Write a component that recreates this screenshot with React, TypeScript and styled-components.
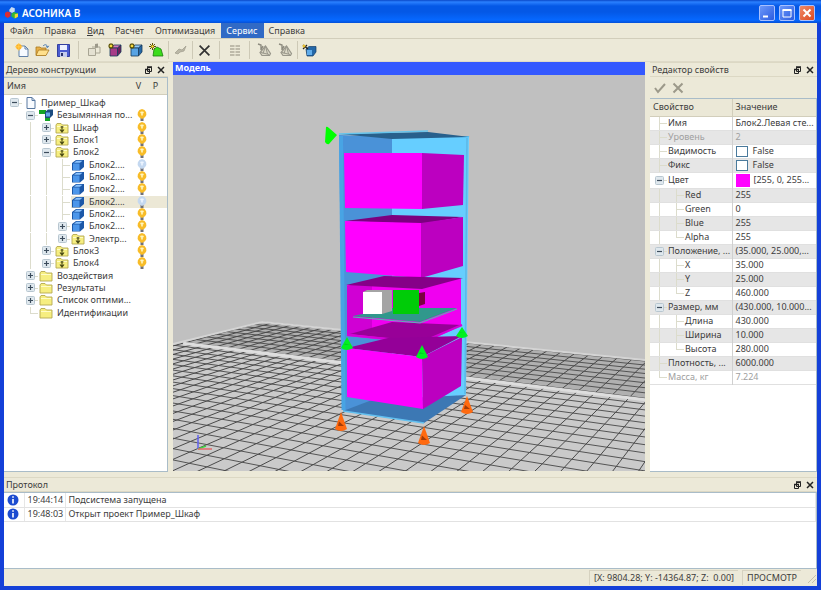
import React from "react";
import styled, { createGlobalStyle, css } from "styled-components";

const Global = createGlobalStyle`
  * { box-sizing: border-box; }
  body { margin: 0; background: #0f3fd8; }
  button { font: inherit; color: inherit; border: 0; padding: 0; background: none; }
  body, table { font-family: "Noto Sans", "Open Sans", sans-serif; font-size: 9px; line-height: 12px; color: #3c3c3c; }
`;

const Window = styled.div`
  min-height: 100vh;
  display: flex;
  flex-direction: column;
  background: #ece9d8;
  border: solid #1440d8;
  border-width: 0 4px 4px;
`;

const TitleBar = styled.header`
  display: flex;
  align-items: center;
  gap: 4px;
  height: 23px;
  margin: 0 -4px;
  padding: 2px 6px 0 5px;
  color: #fff;
  background: linear-gradient(#0a48c8 0, #2a80ff 2px, #0458e6 6px, #0458e6 12px, #0668ff 20px, #0450d8 23px);
`;
const AppName = styled.h1`
  flex: 1;
  margin: 0;
  font-size: 10px;
  font-weight: 600;
  line-height: 14px;
`;
const Caption = styled.button<{ $danger?: boolean }>`
  width: 16px;
  height: 16px;
  border: 1px solid #a8c0ff;
  border-radius: 2px;
  background: ${(p) => (p.$danger ? "linear-gradient(135deg,#f08a68,#dc4a20)" : "linear-gradient(135deg,#6c98fa,#2c5ce0)")};
  svg { display: block; }
`;

const MenuBar = styled.nav`
  display: flex;
  height: 16px;
  padding-left: 1px;
  border-bottom: 1px solid #d2cebb;
`;
const MenuItem = styled.button<{ $active?: boolean }>`
  padding: 0 6px 0 5px;
  line-height: 15px;
  ${(p) => p.$active && css`background: #316ac5; color: #fff;`}
`;

const ToolBar = styled.div`
  display: flex;
  align-items: center;
  height: 23px;
  padding: 0 7px;
  border-bottom: 1px solid #dedac8;
`;
const Tool = styled.button`
  width: 21px;
  height: 18px;
  display: grid;
  place-items: center;
  svg { display: block; }
`;
const Separator = styled.span<{ $wide?: boolean }>`
  width: 1px;
  height: 18px;
  margin: 0 ${(p) => (p.$wide ? 4 : 1)}px;
  background: #cdc9b6;
`;

const Workspace = styled.main`
  flex: 1;
  display: flex;
  gap: 5px;
`;
const Dock = styled.section<{ $width?: number }>`
  display: flex;
  flex-direction: column;
  flex: ${(p) => (p.$width ? `0 0 ${p.$width}px` : "none")};
  min-width: 0;
`;
const BottomDock = styled(Dock)`
  padding-top: 5px;
`;
const DockTitle = styled.div`
  display: flex;
  align-items: center;
  height: 15px;
  padding: 0 1px 0 2px;
  border-top: 1px solid #dcd8c4;
  border-bottom: 1px solid #dcd8c4;
  h2 { flex: 1; margin: 0; font-size: 9px; font-weight: 400; line-height: 13px; }
`;
const DockButton = styled.button`
  width: 12px;
  height: 12px;
  svg { display: block; }
`;
const Sheet = styled.div`
  flex: 1;
  background: #fff;
  border: 1px solid #a9bcc8;
  border-width: 1px 1px 1px 0;
  overflow: hidden;
`;

const Tree = styled.table`
  width: 100%;
  border-collapse: collapse;
  table-layout: fixed;
  td, th { padding: 0; }
  thead tr { height: 16px; background: #ebe8d7; }
  th { font-weight: 400; text-align: center; border-bottom: 1px solid #d2cebb; }
  th:first-child { text-align: left; padding-left: 3px; }
  tbody::before { content: ""; display: block; height: 2px; }
`;
const TreeRow = styled.tr<{ $selected?: boolean }>`
  height: 12px;
  &:nth-child(3n + 2) { height: 13px; }
  td { height: inherit; }
  ${(p) => p.$selected && css`background: linear-gradient(90deg, transparent 67px, #ece8d6 67px);`}
`;
const NodeCell = styled.div`
  display: flex;
  align-items: center;
  height: 12px;
  padding-left: 2px;
  white-space: nowrap;
  > * { flex-shrink: 0; }
`;
const Guide = styled.span<{ $line?: boolean }>`
  align-self: stretch;
  width: 16px;
  background: ${(p) => (p.$line ? "linear-gradient(#dcdccc,#dcdccc) 8px 0 / 1px 100% no-repeat" : "none")};
`;
const Expander = styled.button`
  width: 16px;
  height: 12px;
  display: grid;
  place-items: center;
  background: linear-gradient(#dcdccc, #dcdccc) 8px 6px / 8px 1px no-repeat;
  svg { display: block; }
`;
const Leaf = styled.span<{ $last?: boolean }>`
  align-self: stretch;
  width: 16px;
  background: linear-gradient(#dcdccc, #dcdccc) 8px 0 / 1px ${(p) => (p.$last ? "50%" : "100%")} no-repeat,
    linear-gradient(#dcdccc, #dcdccc) 8px 6px / 8px 1px no-repeat;
`;
const NodeIcon = styled.span`
  width: 19px;
  height: 12px;
  padding-left: 1px;
  svg { display: block; }
`;
const Bulb = styled.button`
  display: block;
  width: 20px;
  height: 12px;
  padding-left: 4px;
  svg { display: block; }
`;

const Scene = styled.section`
  flex: 1;
  min-width: 0;
  display: flex;
  flex-direction: column;
  margin-bottom: 1px;
`;
const SceneTitle = styled.h2`
  margin: 0;
  height: 13px;
  padding-left: 2px;
  background: #3358ff;
  color: #fff;
  font-size: 9px;
  line-height: 12px;
  font-weight: 700;
`;
const Canvas = styled.div`
  flex: 1;
  display: grid;
  min-height: 0;
  background: #c0c0c0;
  svg { display: block; width: 100%; height: 100%; min-height: 0; }
`;

const PropActions = styled.div`
  display: flex;
  gap: 5px;
  height: 21px;
  padding: 5px 3px 4px;
  svg { display: block; }
`;
const Props = styled.table`
  width: 100%;
  border-collapse: collapse;
  table-layout: fixed;
  th, td { padding: 0; text-align: left; font-weight: 400; white-space: nowrap; }
  thead tr { height: 17px; background: #ebe8d7; }
  thead th { padding-left: 3px; border-bottom: 1px solid #d2cebb; }
  thead th + th { border-left: 1px solid #d2cebb; }
  td { padding-left: 3px; border-left: 1px solid #d0d0d0; }
`;
const PropRow = styled.tr<{ $shade?: boolean; $muted?: boolean; $tall?: boolean }>`
  height: ${(p) => (p.$tall ? 16 : 14)}px;
  background: ${(p) => (p.$shade ? "#e6e6e6" : "#fff")};
  color: ${(p) => (p.$muted ? "#a0a0a0" : "#3c3c3c")};
  border-bottom: 1px solid #e0e0e0;
`;
const PropName = styled.div`
  display: flex;
  align-items: center;
  gap: 1px;
  height: 13px;
  padding-left: 1px;
`;
const PropValue = styled.div`
  display: flex;
  align-items: center;
  height: 12px;
`;
const Check = styled.input`
  appearance: none;
  width: 12px;
  height: 11px;
  margin: 0 5px 0 0;
  border: 1px solid #4a7a9c;
  background: #fff;
`;
const Swatch = styled.button`
  width: 14px;
  height: 13px;
  margin-right: 4px;
  background: #ff00ff;
`;

const LogSheet = styled(Sheet)`
  flex: none;
  min-height: 77px;
`;
const Log = styled.table`
  width: 100%;
  border-collapse: collapse;
  table-layout: fixed;
  td { height: 14px; padding: 0 0 0 3px; border-bottom: 1px solid #e2e2e2; border-right: 1px solid #e6e6e6; }
  svg { display: block; }
`;
const StatusBar = styled.footer`
  display: flex;
  justify-content: flex-end;
  align-items: center;
  gap: 4px;
  height: 17px;
`;
const StatusCell = styled.span`
  padding: 0 4px;
  line-height: 14px;
  border: solid #d6d2c0;
  border-width: 1px 0 0 1px;
  white-space: pre;
`;

/* ---------- icons ---------- */

const Cube = ({ front, top, side }: { front: string; top: string; side: string }) => (
  <svg width="14" height="14" viewBox="0 0 14 14" aria-hidden>
    <path d="M2 5 6 2h7L9.500 5z" fill={top} stroke="#173a5c" strokeWidth=".8" />
    <path d="M9.500 5 13 2v7l-3.500 4z" fill={side} stroke="#173a5c" strokeWidth=".8" />
    <path d="M2 5h7.500v8H2z" fill={front} stroke="#173a5c" strokeWidth=".8" />
    <path d="M3 0v6M0 3h6M1 1l4 4M5 1 1 5" stroke="#5c5200" strokeWidth="1.100" />
    <circle cx="3" cy="3" r="1.200" fill="#ffe040" />
  </svg>
);
const BlueCube = () => (
  <svg width="14" height="12" viewBox="0 0 14 12" aria-hidden>
    <path d="M1 4 5 1h8v7l-4 3.500H1z" fill="#1c58a8" />
    <path d="M2 4.500h6.500V11H2z" fill="#4c96ea" />
    <path d="M3 3.700 5.500 1.800h6L9 3.700z" fill="#8cc4ff" />
  </svg>
);
const Folder = ({ mark }: { mark?: boolean }) => (
  <svg width="14" height="12" viewBox="0 0 14 12" aria-hidden>
    <path d="M1 3 2 1.500h4L7.500 3H13v8H1z" fill="#f6ee80" stroke="#b4a850" strokeWidth=".9" />
    <path d="M2 4.500h10" stroke="#fffcc8" />
    {mark && <path d="M7 4v6M5 7.500 7 10l2-2.500M5.500 5h3" stroke="#4c4c14" strokeWidth="1.200" fill="none" />}
  </svg>
);
const Page = () => (
  <svg width="14" height="12" viewBox="0 0 14 12" aria-hidden>
    <path d="M4 .5h5L12 3.500v8H4z" fill="#f8fbff" stroke="#5878a0" />
    <path d="M9 .5v3h3" fill="none" stroke="#5878a0" />
  </svg>
);
const Assembly = () => (
  <svg width="16" height="12" viewBox="0 0 16 12" aria-hidden>
    <path d="M0 1h7v4H0zM6 7h5v5H6z" fill="#14a424" />
    <path d="M6 3 9 .5h5V6l-3 3H6z" fill="#1c4c80" />
    <path d="M7 3.500h4v4H7z" fill="#66a8e8" />
  </svg>
);
const PlusMinus = ({ open }: { open?: boolean }) => (
  <svg width="9" height="9" viewBox="0 0 9 9" aria-hidden>
    <rect x=".5" y=".5" width="8" height="8" rx="1" fill="#dfe8ee" stroke="#b8c6d0" />
    <path d={open ? "M2 4.500h5" : "M2 4.500h5M4.500 2v5"} stroke="#3c4c5c" strokeWidth="1.200" />
  </svg>
);
const BulbIcon = ({ off }: { off?: boolean }) => (
  <svg width="16" height="12" viewBox="0 0 16 12" aria-hidden>
    <path d="M6.500 8.500h3V12h-3z" fill="#707078" />
    <path d="M8 0a4.800 4.800 0 0 1 3 8.200L8 10 5 8.200A4.800 4.800 0 0 1 8 0z" fill={off ? "#c4d8f0" : "#f8bc28"} />
    <path d="M8 2.500v4M6.300 3.500h3.400" stroke={off ? "#eef5ff" : "#fff6c0"} strokeWidth="1.600" />
  </svg>
);
const Cross = ({ size = 12, color = "#333", w = 1.6 }: { size?: number; color?: string; w?: number }) => (
  <svg width={size} height={size} viewBox="0 0 12 12" aria-hidden>
    <path d="M1.500 1.500l9 9M10.500 1.500l-9 9" stroke={color} strokeWidth={w} />
  </svg>
);
const NewIcon = () => (
  <svg width="14" height="14" viewBox="0 0 14 14" aria-hidden>
    <path d="M4 3h6l3 3v7.500H4z" fill="#f6faff" stroke="#6080a8" />
    <path d="M10 3v3h3" fill="none" stroke="#6080a8" />
    <circle cx="3.800" cy="3.800" r="2.800" fill="#ffb020" />
    <path d="M3.800 0v7.600M0 3.800h7.600" stroke="#ffcc50" />
  </svg>
);
const OpenIcon = () => (
  <svg width="15" height="14" viewBox="0 0 15 14" aria-hidden>
    <path d="M1 4h4l1 1h5v7H1z" fill="#e8b048" stroke="#a87820" strokeWidth=".8" />
    <path d="M3.500 7H14l-3 5.500H1z" fill="#ffe08c" stroke="#a87820" strokeWidth=".8" />
    <path d="M8 3c2-2 4-1.500 4.500 1M11 3.500l1.700 1 1-1.700" fill="none" stroke="#4878b0" />
  </svg>
);
const SaveIcon = () => (
  <svg width="13" height="13" viewBox="0 0 13 13" aria-hidden>
    <path d="M.5.5h12v12H.5z" fill="#4a5cd0" stroke="#3440a0" />
    <path d="M3 1h7v5H3z" fill="#eef2ff" />
    <path d="M3 8h7v5H3z" fill="#c4ccec" />
    <path d="M4 9h2v3H4z" fill="#28306c" />
  </svg>
);
const GreyPackage = () => (
  <svg width="14" height="14" viewBox="0 0 14 14" aria-hidden>
    <path d="M1.500 5.500h7v7h-7z" fill="#e4e1d2" stroke="#a8a594" />
    <path d="M5 4h8v6H9" fill="none" stroke="#a8a594" />
    <path d="M8 1l3-.5v4L8 5z" fill="#9c998a" />
  </svg>
);
const GreenBlock = () => (
  <svg width="15" height="14" viewBox="0 0 15 14" aria-hidden>
    <path d="M4 13 5 6l3-2 4 2 2 7z" fill="#3cdc1c" stroke="#1c7c10" strokeWidth=".8" />
    <path d="M3.500 0v7M0 3.500h7M1 1l5 5M6 1 1 6" stroke="#5c5200" />
    <circle cx="3.500" cy="3.500" r="1.200" fill="#ffe040" />
  </svg>
);
const GreyPlane = () => (
  <svg width="14" height="10" viewBox="0 0 14 10" aria-hidden>
    <path d="M1 8 5 4l3 1 4-4-2 5-4 1-2 2z" fill="#bab7a6" stroke="#a4a192" strokeWidth=".8" />
  </svg>
);
const GreyList = () => (
  <svg width="12" height="13" viewBox="0 0 12 13" aria-hidden>
    <path d="M1 2h10M1 5h10M1 8h10M1 11h10" stroke="#aeab9b" strokeWidth="1.500" />
    <path d="M6 1v11" stroke="#ece9d8" />
  </svg>
);
const GreyCone = () => (
  <svg width="15" height="14" viewBox="0 0 15 14" aria-hidden>
    <path d="M1 1l3 1v5l2-4" fill="none" stroke="#8c8a7e" strokeWidth="1.400" />
    <path d="M8.500 3 3 9.500 5 12.500h7.500l1-2z" fill="#dcd9c8" stroke="#98968a" strokeWidth="1.200" />
    <path d="M8.500 3 6 10.500M8.500 3l2 8M4 9.500l8 2" fill="none" stroke="#98968a" />
  </svg>
);
const CubeGroup = () => (
  <svg width="15" height="14" viewBox="0 0 15 14" aria-hidden>
    <path d="M4 6 7 3.500h7V9l-3 4H5z" fill="#2468a8" stroke="#123c68" strokeWidth=".7" />
    <path d="M5 7h5v5H5z" fill="#60acea" />
    <path d="M1 2l5 4M1 6l4-4" stroke="#222" strokeWidth="1.200" />
    <circle cx="2" cy="3" r="1.500" fill="#e8c030" />
  </svg>
);
const LogoIcon = () => (
  <svg width="13" height="13" viewBox="0 0 12 12" aria-hidden>
    <path d="M4 3.500 6 1l3 1v3L6.500 6.500 4 5z" fill="#c8dcf4" />
    <path d="M0 6.500 2 5l3 1v3.500L2.500 11 0 9.500z" fill="#dc2c30" />
    <path d="M6 7l2.500-1.500L12 7v3l-3 1.500L6 10z" fill="#34b834" />
    <path d="M9 7.500l3-.5v3l-3 1.500z" fill="#f0d838" />
  </svg>
);
const FloatIcon = () => (
  <svg width="12" height="12" viewBox="0 0 12 12" aria-hidden>
    <path d="M4.500 3.500h4v4h-4zM2.500 5.500h4v4h-4z" fill="#ece9d8" stroke="#222" />
    <path d="M4 3h5M2 5.500h5" stroke="#222" strokeWidth="1.500" />
  </svg>
);
const InfoIcon = () => (
  <svg width="12" height="12" viewBox="0 0 12 12" aria-hidden>
    <circle cx="6" cy="6" r="5.500" fill="#1c4cd0" />
    <path d="M6 5v4.500M6 2.300v1.500" stroke="#fff" strokeWidth="1.600" />
  </svg>
);

const DockHead = ({ title }: { title: string }) => (
  <DockTitle>
    <h2>{title}</h2>
    <DockButton aria-label="Открепить"><FloatIcon /></DockButton>
    <DockButton aria-label="Закрыть">
      <svg width="12" height="12" viewBox="0 0 12 12"><path d="M3 3l6 6M9 3 3 9" stroke="#222" strokeWidth="1.500" /></svg>
    </DockButton>
  </DockTitle>
);

/* ---------- data ---------- */

type Kind = "page" | "assembly" | "marked" | "cube" | "folder";
type Node = { depth: number; kind: Kind; text: string; exp?: "+" | "-"; bulb?: "on" | "off"; sel?: boolean };
const nodes: Node[] = [
  { depth: 0, kind: "page", text: "Пример_Шкаф", exp: "-" },
  { depth: 1, kind: "assembly", text: "Безымянная по...", exp: "-", bulb: "on" },
  { depth: 2, kind: "marked", text: "Шкаф", exp: "+", bulb: "on" },
  { depth: 2, kind: "marked", text: "Блок1", exp: "+", bulb: "on" },
  { depth: 2, kind: "marked", text: "Блок2", exp: "-", bulb: "on" },
  { depth: 3, kind: "cube", text: "Блок2....", bulb: "off" },
  { depth: 3, kind: "cube", text: "Блок2....", bulb: "on" },
  { depth: 3, kind: "cube", text: "Блок2....", bulb: "on" },
  { depth: 3, kind: "cube", text: "Блок2....", bulb: "off", sel: true },
  { depth: 3, kind: "cube", text: "Блок2....", bulb: "on" },
  { depth: 3, kind: "cube", text: "Блок2....", exp: "+", bulb: "on" },
  { depth: 3, kind: "marked", text: "Электр...", exp: "+", bulb: "on" },
  { depth: 2, kind: "marked", text: "Блок3", exp: "+", bulb: "on" },
  { depth: 2, kind: "marked", text: "Блок4", exp: "+", bulb: "on" },
  { depth: 1, kind: "folder", text: "Воздействия", exp: "+" },
  { depth: 1, kind: "folder", text: "Результаты", exp: "+" },
  { depth: 1, kind: "folder", text: "Список оптими...", exp: "+" },
  { depth: 1, kind: "folder", text: "Идентификации" },
];
const kindIcon: Record<Kind, React.ReactNode> = {
  page: <Page />, assembly: <Assembly />, marked: <Folder mark />, cube: <BlueCube />, folder: <Folder />,
};

type Prop = { name: string; value: string; depth?: number; group?: boolean; muted?: boolean; check?: boolean; color?: boolean };
const props: Prop[] = [
  { name: "Имя", value: "Блок2.Левая сте..." },
  { name: "Уровень", value: "2", muted: true },
  { name: "Видимость", value: "False", check: true },
  { name: "Фикс", value: "False", check: true },
  { name: "Цвет", value: "[255, 0, 255...", group: true, color: true },
  { name: "Red", value: "255", depth: 1 },
  { name: "Green", value: "0", depth: 1 },
  { name: "Blue", value: "255", depth: 1 },
  { name: "Alpha", value: "255", depth: 1 },
  { name: "Положение, ...", value: "(35.000, 25.000,...", group: true },
  { name: "X", value: "35.000", depth: 1 },
  { name: "Y", value: "25.000", depth: 1 },
  { name: "Z", value: "460.000", depth: 1 },
  { name: "Размер, мм", value: "(430.000, 10.000...", group: true },
  { name: "Длина", value: "430.000", depth: 1 },
  { name: "Ширина", value: "10.000", depth: 1 },
  { name: "Высота", value: "280.000", depth: 1 },
  { name: "Плотность, ...", value: "6000.000" },
  { name: "Масса, кг", value: "7.224", muted: true },
];

const menus = ["Файл", "Правка", "Вид", "Расчет", "Оптимизация", "Сервис", "Справка"];
const log = [
  ["19:44:14", "Подсистема запущена"],
  ["19:48:03", "Открыт проект Пример_Шкаф"],
];

/* ---------- 3D scene ---------- */

const HORIZON = 166;
const BASE = 472;
const VA = -1267;
const VB = 845;
type Pt = [number, number];
const at = (v: number, x: number, y: number): Pt => [v + ((x - v) * (y - HORIZON)) / (BASE - HORIZON), y];
/* crossing of floor line a (through VA) and floor line b (through VB), both given at BASE */
const cross = (a: number, b: number): Pt => {
  const t = (VB - VA) / (a - VA - (b - VB));
  return [VA + (a - VA) * t, HORIZON + (BASE - HORIZON) * t];
};
const A0 = 1732;
const B0 = -298;
const seg = (p: Pt, q: Pt) => `M${p[0].toFixed(1)} ${p[1].toFixed(1)}L${q[0].toFixed(1)} ${q[1].toFixed(1)}`;
const alongA = (a: number) => seg(cross(a, B0), at(VA, a, 640));
const floorA = Array.from({ length: 31 }, (_, i) => alongA(A0 - 60 * i)).join("");
const floorB = Array.from({ length: 46 }, (_, j) => B0 + 26 * j).map((b) => seg(cross(A0, b), at(VB, b, 640))).join("");
const brightLine = alongA(1237);

const Cone = ({ x, y, h, fill, dark }: { x: number; y: number; h: number; fill: string; dark: string }) => (
  <g>
    <path d={`M${x} ${y}L${x + 6} ${y + h - 2}Q${x} ${y + h + 2} ${x - 6} ${y + h - 2}Z`} fill={fill} />
    <path d={`M${x - 2} ${y + h / 2}L${x + 3} ${y + h - 5}L${x - 3} ${y + h - 5}Z`} fill={dark} />
  </g>
);

const Model = () => (
  <svg viewBox="173 75 472 396" preserveAspectRatio="xMidYMid slice" role="img" aria-label="Трёхмерная модель шкафа">
    <path d="M-300 461 262 322 900 387V900H-300z" fill="#cacaca" />
    <path d="M173 344 262 322 645 361V400L195 345z" fill="#b0b0b0" />
    <path d={floorA} stroke="#545454" />
    <path d={floorB} stroke="#4a4a4a" />
    <path d={brightLine} stroke="#dedede" strokeWidth="3" />
    <path d="M173 344 262 322 645 360" fill="none" stroke="#d4d4d4" strokeWidth="2" />

    <path d="M339 135 392 137V402L343 411z" fill="#4a92d8" />
    <path d="M392 138 469 136 466 395 392 402z" fill="#66ceff" />
    <path d="M343 411 372 400 466 395 424 423z" fill="#3c78b4" />
    <path d="M343 411 424 423" stroke="#62c0f0" strokeWidth="1.500" />
    <path d="M341 136 343.500 410" stroke="#48a4e4" strokeWidth="4" />
    <path d="M339 134 428 132 470 137 392 139z" fill="#28608c" />
    <path d="M339 134 428 131" stroke="#66c4ec" strokeWidth="1.500" />
    <path d="M467 138 465 394" stroke="#5cb8e8" strokeWidth="1.500" />

    <path d="M344 153 422 153 422 209 345 208z" fill="#f0f" />
    <path d="M422 153 464 155 463 205 422 209z" fill="#bc00c0" />

    <path d="M345 221 392 215 463 217 421 224z" fill="#7c0080" />
    <path d="M345 221 421 223 421 278 346 272z" fill="#f0f" />
    <path d="M421 223 463 217 463 266 421 278z" fill="#bc00c0" />

    <path d="M347 285 384 279 461 279V326L422 344 347 336z" fill="#f000f0" />
    <path d="M347 286 372 280V328L347 336z" fill="#d000d4" />
    <path d="M346 285 384 276 463 278 422 289z" fill="#860088" />
    <path d="M350 334 392 322 462 325 422 342z" fill="#980098" />
    <path d="M347 335 422 342 462 325" fill="none" stroke="#d400d8" strokeWidth="2" />
    <path d="M353 316 392 308 457 308 420 322z" fill="#30988c" />
    <path d="M353 317 420 323 457 309" fill="none" stroke="#58b8b0" />
    <path d="M363 292 367 290H392V311L382 314z" fill="#a4a4a4" />
    <path d="M363 292H382V314H363z" fill="#fff" />
    <path d="M393 290H419V314H393z" fill="#00cc08" />
    <path d="M419 293 425 292V304L419 306z" fill="#7c0040" />

    <path d="M347 348 388 338 462 336 422 357z" fill="#940098" />
    <path d="M347 348 422 357 423 409 347 397z" fill="#f0f" />
    <path d="M422 357 462 337 461 386 423 409z" fill="#bc00c0" />

    <path d="M326 127Q327 126 329 128L337 135 329 144Q327 145 325 142z" fill="#0f0" />
    <Cone x={347} y={337} h={13} fill="#00f020" dark="#00d020" />
    <Cone x={422} y={345} h={14} fill="#00f020" dark="#00d020" />
    <Cone x={462} y={327} h={11} fill="#00f020" dark="#00d020" />
    <Cone x={341} y={412} h={19} fill="#ff6a10" dark="#a43c08" />
    <Cone x={424} y={426} h={19} fill="#ff6a10" dark="#a43c08" />
    <Cone x={467} y={396} h={18} fill="#ff6a10" dark="#a43c08" />

    <path d="M198 449V435" stroke="#6060f0" strokeWidth="1.500" />
    <path d="M198 449 206 446" stroke="#40d040" strokeWidth="1.500" />
    <path d="M198 449H212" stroke="#e06868" strokeWidth="1.500" />
  </svg>
);

export default function App() {
  return (
    <>
      <Global />
      <Window>
        <TitleBar>
          <LogoIcon />
          <AppName>АСОНИКА В</AppName>
          <Caption aria-label="Свернуть"><svg width="14" height="14"><path d="M3 10.500h5" stroke="#fff" strokeWidth="2" /></svg></Caption>
          <Caption aria-label="Развернуть"><svg width="14" height="14"><path d="M3 4h8v7H3z" fill="none" stroke="#fff" /><path d="M2.500 4h9" stroke="#fff" strokeWidth="2" /></svg></Caption>
          <Caption $danger aria-label="Закрыть"><svg width="14" height="14"><path d="M3.500 3.500l7 7M10.500 3.500l-7 7" stroke="#fff" strokeWidth="2" /></svg></Caption>
        </TitleBar>
        <MenuBar>
          {menus.map((m) => <MenuItem key={m} $active={m === "Сервис"}>{m === "Вид" ? <><u>В</u>ид</> : m}</MenuItem>)}
        </MenuBar>
        <ToolBar>
          <Tool aria-label="Создать"><NewIcon /></Tool>
          <Tool aria-label="Открыть"><OpenIcon /></Tool>
          <Tool aria-label="Сохранить"><SaveIcon /></Tool>
          <Separator $wide />
          <Tool aria-label="Импорт"><GreyPackage /></Tool>
          <Tool aria-label="Добавить блок"><Cube front="#a83c88" top="#d878bc" side="#70205c" /></Tool>
          <Tool aria-label="Добавить элемент"><Cube front="#58a4e4" top="#94ccf8" side="#2468a8" /></Tool>
          <Tool aria-label="Добавить опору"><GreenBlock /></Tool>
          <Separator />
          <Tool aria-label="Плоскость"><GreyPlane /></Tool>
          <Separator />
          <Tool aria-label="Удалить"><Cross size={13} /></Tool>
          <Separator $wide />
          <Tool aria-label="Список"><GreyList /></Tool>
          <Separator $wide />
          <Tool aria-label="Опора 1"><GreyCone /></Tool>
          <Tool aria-label="Опора 2"><GreyCone /></Tool>
          <Separator />
          <Tool aria-label="Сборка"><CubeGroup /></Tool>
        </ToolBar>
        <Workspace>
          <Dock $width={164}>
            <DockHead title="Дерево конструкции" />
            <Sheet>
              <Tree>
                <colgroup><col /><col width="17" /><col width="17" /><col width="3" /></colgroup>
                <thead><tr><th>Имя</th><th>V</th><th>P</th><th /></tr></thead>
                <tbody>
                  {nodes.map((n, i) => (
                    <TreeRow key={i} $selected={n.sel}>
                      <td>
                        <NodeCell>
                          {Array.from({ length: n.depth }, (_, k) => (
                            <Guide key={k} $line={k > 0 && i < (k === 1 ? 17 : 13)} />
                          ))}
                          {n.exp ? <Expander aria-label="Раскрыть"><PlusMinus open={n.exp === "-"} /></Expander> : <Leaf $last={i === nodes.length - 1} />}
                          <NodeIcon>{kindIcon[n.kind]}</NodeIcon>
                          <span>{n.text}</span>
                        </NodeCell>
                      </td>
                      <td>{n.bulb && <Bulb aria-label="Видимость"><BulbIcon off={n.bulb === "off"} /></Bulb>}</td>
                      <td /><td />
                    </TreeRow>
                  ))}
                </tbody>
              </Tree>
            </Sheet>
          </Dock>
          <Scene>
            <SceneTitle>Модель</SceneTitle>
            <Canvas><Model /></Canvas>
          </Scene>
          <Dock $width={167}>
            <DockHead title="Редактор свойств" />
            <PropActions>
              <button aria-label="Применить"><svg width="14" height="12"><path d="M2 6l3 4 7-8" fill="none" stroke="#9c998a" strokeWidth="2" /></svg></button>
              <button aria-label="Отменить"><Cross color="#9c998a" w={2} /></button>
            </PropActions>
            <Sheet>
              <Props>
                <colgroup><col width="82" /><col /></colgroup>
                <thead><tr><th>Свойство</th><th>Значение</th></tr></thead>
                <tbody>
                  {props.map((p, i) => (
                    <PropRow key={p.name} $shade={i % 2 === 1} $muted={p.muted} $tall={p.color}>
                      <th scope="row">
                        <PropName>
                          {p.depth ? <Guide $line /> : null}
                          {p.group ? <Expander aria-label="Свернуть"><PlusMinus open /></Expander> : <Leaf $last={!!p.depth && !props[i + 1].depth || i === props.length - 1} />}
                          {p.check ? <label htmlFor={`prop-${i}`}>{p.name}</label> : p.name}
                        </PropName>
                      </th>
                      <td>
                        <PropValue>
                          {p.check && <Check type="checkbox" id={`prop-${i}`} />}
                          {p.color && <Swatch aria-label="Выбрать цвет" />}
                          {p.value}
                        </PropValue>
                      </td>
                    </PropRow>
                  ))}
                </tbody>
              </Props>
            </Sheet>
          </Dock>
        </Workspace>
        <BottomDock>
          <DockHead title="Протокол" />
          <LogSheet>
            <Log>
              <colgroup><col width="20" /><col width="41" /><col /></colgroup>
              <tbody>
                {log.map(([time, text]) => (
                  <tr key={time}><td><InfoIcon /></td><td>{time}</td><td>{text}</td></tr>
                ))}
              </tbody>
            </Log>
          </LogSheet>
        </BottomDock>
        <StatusBar>
          <StatusCell>{"[X: 9804.28; Y: -14364.87; Z:  0.00]"}</StatusCell>
          <StatusCell>ПРОСМОТР</StatusCell>
          <svg width="12" height="12" aria-hidden><path d="M11 3 3 11M11 7 7 11" stroke="#c4c0ac" /></svg>
        </StatusBar>
      </Window>
    </>
  );
}
